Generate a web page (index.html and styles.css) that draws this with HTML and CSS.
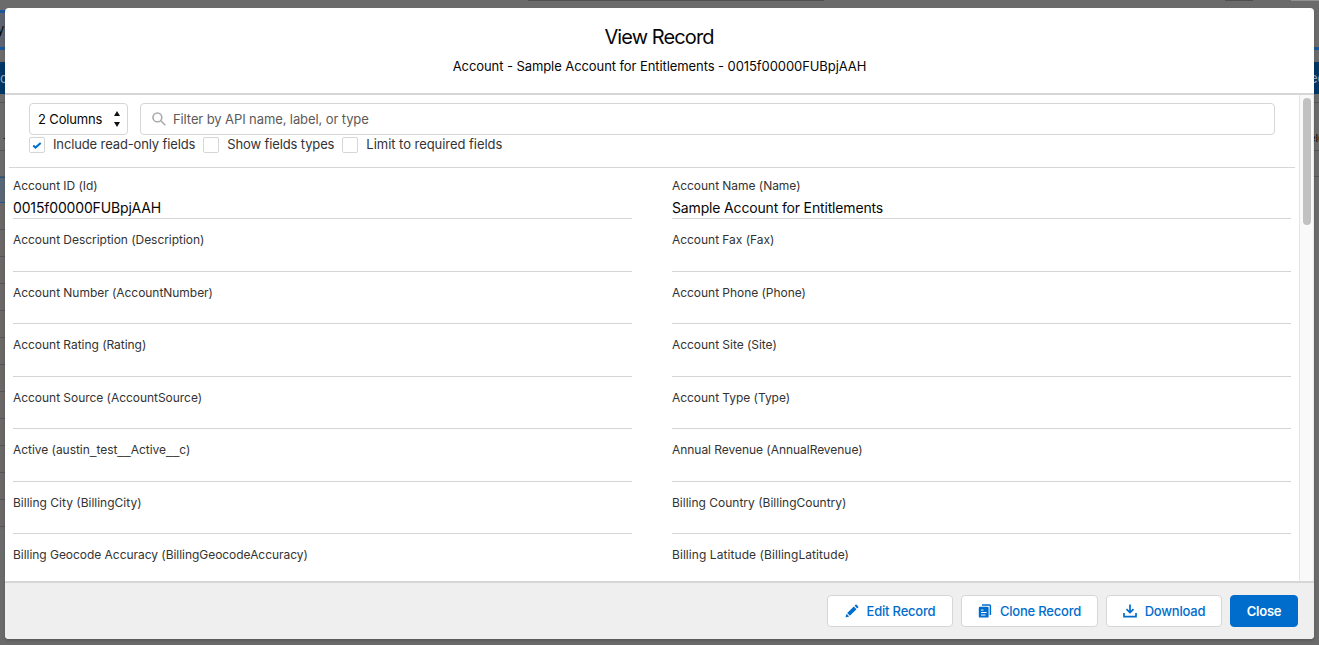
FILE: index.html
```
<!DOCTYPE html>
<html lang="en">
<head>
<meta charset="utf-8">
<title>View Record</title>
<link rel="stylesheet" href="styles.css">
</head>
<body>
<div class="page">
  <div class="edge edge-left">
    <div class="tab-bar">y</div>
    <div class="action-bar">c</div>
    <div class="toolbar-line"></div>
    <div class="heading-cell">-</div>
    <div class="filter-cell"></div>
    <div class="selected-cell"></div>
    <div class="grid-lines"></div>
  </div>
  <div class="top-strip"><i class="search-edge"></i><i class="menu-edge"></i><i class="avatar-edge"></i></div>
  <div class="edge edge-right">
    <div class="tab-bar"></div>
    <div class="action-bar">ec</div>
    <div class="toolbar-line"></div>
    <div class="heading-cell">ele</div>
    <div class="filter-cell"></div>
  </div>
</div>
<section class="modal">
  <header class="modal-header">
    <h2 class="title">View Record</h2>
    <p class="tagline">Account - Sample Account for Entitlements - 0015f00000FUBpjAAH</p>
  </header>
  <div class="modal-body">
    <div class="content">
      <div class="filters">
        <div class="filter-row">
          <div class="select"><span>2 Columns</span>
            <svg width="6" height="16" viewBox="0 0 6 16"><path d="M3 0 6 5H0zM3 16 6 11H0z" fill="#111"/></svg>
          </div>
          <div class="search">
            <svg width="14" height="14" viewBox="0 0 14 14" fill="none" stroke="#aaa" stroke-width="1.6" stroke-linecap="round"><circle cx="5.4" cy="5.4" r="4.4"/><path d="m8.8 8.8 4 3.9"/></svg>
            <span>Filter by API name, label, or type</span>
          </div>
        </div>
        <div class="checks">
          <label class="check"><span class="box"><svg width="10" height="8" viewBox="0 0 10 8" fill="none" stroke="#0070d2" stroke-width="2"><path d="m1.2 4.6 2.3 2 5.2-4.6"/></svg></span><span class="check-text">Include read-only fields</span></label>
          <label class="check"><span class="box"></span><span class="check-text">Show fields types</span></label>
          <label class="check"><span class="box"></span><span class="check-text loose">Limit to required fields</span></label>
        </div>
      </div>
      <div class="fields">
        <div class="field"><span class="label">Account ID (Id)</span><span class="value">0015f00000FUBpjAAH</span></div>
        <div class="field"><span class="label">Account Name (Name)</span><span class="value">Sample Account for Entitlements</span></div>
        <div class="field"><span class="label">Account Description (Description)</span></div>
        <div class="field"><span class="label">Account Fax (Fax)</span></div>
        <div class="field"><span class="label">Account Number (AccountNumber)</span></div>
        <div class="field"><span class="label">Account Phone (Phone)</span></div>
        <div class="field"><span class="label">Account Rating (Rating)</span></div>
        <div class="field"><span class="label">Account Site (Site)</span></div>
        <div class="field"><span class="label">Account Source (AccountSource)</span></div>
        <div class="field"><span class="label">Account Type (Type)</span></div>
        <div class="field"><span class="label">Active (austin<span class="wide">_</span>test<span class="wide">__</span>Active<span class="wide">__</span>c)</span></div>
        <div class="field"><span class="label">Annual Revenue (AnnualRevenue)</span></div>
        <div class="field"><span class="label narrow">Billing City (BillingCity)</span></div>
        <div class="field"><span class="label narrow">Billing Country (BillingCountry)</span></div>
        <div class="field"><span class="label">Billing Geocode Accuracy (BillingGeocodeAccuracy)</span></div>
        <div class="field"><span class="label latitude">Billing Latitude (BillingLatitude)</span></div>
      </div>
    </div>
    <div class="scrollbar"><div class="thumb"></div></div>
  </div>
  <footer class="modal-footer">
    <button class="btn edit"><svg width="14" height="14" viewBox="0 0 14 14" fill="currentColor"><path d="M.5 13.5 1.5 9.8 4.2 12.5zM2.2 9.1 8.8 2.5 11.5 5.2 4.9 11.8zM9.6 1.7 10.5.8Q11 .3 11.6.8L13.2 2.4Q13.7 3 13.2 3.5L12.3 4.4z"/></svg><span>Edit Record</span></button>
    <button class="btn clone"><svg width="14" height="14" viewBox="0 0 14 14"><path d="M4 1H11.4Q12.4 1 12.4 2V11" fill="none" stroke="currentColor" stroke-width="1.5"/><rect x=".8" y="2.8" width="9.8" height="10.8" rx="1.2" fill="currentColor"/><path d="M3 6.1H5.5M3 8.5H8.6M3 11H7.5" stroke="#fff" stroke-width="1"/></svg><span>Clone Record</span></button>
    <button class="btn download"><svg width="14" height="14" viewBox="0 0 14 14" fill="none" stroke="currentColor" stroke-width="1.7"><path d="M7 .5V8M3.5 5.2 7 8.6l3.5-3.4M1 9v3.7H13V9"/></svg><span>Download</span></button>
    <button class="btn close"><span>Close</span></button>
  </footer>
</section>
</body>
</html>
```
FILE: styles.css
```
* { box-sizing: border-box; }
body { margin: 0; width: 1319px; height: 645px; overflow: hidden; padding: 8px 5px 6px; font-family: Inter, "Liberation Sans", sans-serif; font-size: 13px; color: #080707; background: #6b6b6b; }
svg { display: block; flex: none; }

/* Dimmed page behind the dialog */
.page { position: absolute; inset: 0; overflow: hidden; }
.edge { position: absolute; top: 0; bottom: 0; width: 8px; padding-top: 10px; overflow: hidden; display: flex; flex-direction: column; }
.edge-left { left: 0; }
.edge-right { right: 0; width: 5px; align-items: stretch; }
.tab-bar { height: 40px; border-top: 3px solid #1b569b; border-bottom: 3px solid #1b569b; background: #5d6370; line-height: 33px; text-indent: -3px; margin-bottom: 12px; flex: none; }
.edge-right .tab-bar { border-top: 0; background: none; }
.action-bar { height: 32px; background: #003765; color: #9ca6b2; line-height: 33px; flex: none; }
.edge-right .action-bar { text-indent: -4px; }
.toolbar-line { height: 9px; border-bottom: 1px solid #555; flex: none; }
.heading-cell { height: 48px; line-height: 70px; text-indent: 3px; border-bottom: 1px solid #555; font-size: 11px; flex: none; }
.edge-right .heading-cell { text-indent: -5px; }
.filter-cell { height: 26px; border-bottom: 1px solid #555; flex: none; }
.selected-cell { height: 26px; border: solid #1b5a91; border-width: 1px 0; background: #596675; flex: none; }
.grid-lines { height: 326px; background: repeating-linear-gradient(#6b6767 0 26px, #565454 26px 27px); flex: none; }
.top-strip { position: absolute; inset: 0 0 auto; height: 1px; }
.top-strip i { position: absolute; top: 0; height: 1px; background: #505050; }
.search-edge { left: 528px; width: 296px; }
.menu-edge { left: 1225px; width: 28px; }
.top-strip .avatar-edge { left: 1291px; width: 28px; background: #929292; }

.modal { position: relative; height: 631px; display: flex; flex-direction: column; background: #fff; border-radius: 4px; overflow: hidden; box-shadow: 0 2px 3px rgba(0,0,0,.16); }
.modal-header { height: 87px; flex: none; border-bottom: 2px solid #d6d6d6; text-align: center; padding-top: 17px; }
.title { margin: 0; font-weight: 400; font-size: 20px; line-height: 25px; letter-spacing: -.9px; padding-right: 1px; }
.tagline { margin: 7px 0 0; line-height: 19px; letter-spacing: -.08px; }
.modal-body { flex: 1; min-height: 0; display: flex; overflow: hidden; }
.content { flex: 1; padding: 0 4px; overflow: hidden; }
.scrollbar { width: 15px; border-left: 1px solid #e4e4e4; border-right: 1px solid #e9e9e9; background: #f9f9f9; padding: 3px 2px 0 3px; }
.thumb { width: 8px; height: 127px; border-radius: 4px; background: #c1c1c1; }

.filters { height: 73px; padding: 8px 20px 0; border-bottom: 1px solid #d6d6d6; }
.filter-row { display: flex; gap: 12px; height: 32px; }
.select, .search { border: 1px solid #d6d6d6; border-radius: 4px; display: flex; align-items: center; }
.select { width: 99px; padding: 0 7px 0 8px; justify-content: space-between; letter-spacing: -.15px; }
.search { flex: 1; padding-left: 11px; gap: 7px; color: #5c5a58; letter-spacing: -.1px; }
.checks { display: flex; gap: 8px; height: 20px; align-items: center; color: #333; }
.check { display: flex; align-items: center; gap: 8px; }
.check-text { letter-spacing: -.13px; padding-bottom: 2px; }
.check-text.loose { letter-spacing: -.04px; }
.box { width: 16px; height: 16px; border: 1px solid #d6d6d6; border-radius: 2px; display: flex; align-items: center; justify-content: center; }

.fields { display: grid; grid-template-columns: 619px 619px; column-gap: 40px; grid-template-rows: 51px; grid-auto-rows: 52.5px; padding-left: 4px; }
.field { border-bottom: 1px solid #d4d4d4; padding-top: 12px; }
.field:nth-child(-n+2) { padding-top: 9px; }
.label { display: block; font-size: 12px; line-height: 18px; color: #333; letter-spacing: -.04px; }
.label.narrow { letter-spacing: 0; }
.label.latitude { letter-spacing: .07px; }
.wide { font-family: "Liberation Sans", sans-serif; letter-spacing: 0; }
.value { display: block; font-size: 14px; line-height: 22px; margin-top: 2px; letter-spacing: -.16px; }

.modal-footer { height: 58px; flex: none; border-top: 2px solid #d6d6d6; background: #efefef; display: flex; justify-content: flex-end; gap: 8px; padding: 12px 16px 0; }
.btn { height: 32px; border: 1px solid #d6d6d6; border-radius: 4px; background: #fff; color: #006dcc; font: 500 13px Inter, sans-serif; letter-spacing: -.2px; display: flex; align-items: center; justify-content: center; gap: 8px; padding: 0; }
.edit { width: 126px; }
.clone { width: 137px; }
.download { width: 116px; }
.close { width: 68px; background: #006dcc; border-color: #006dcc; color: #fff; font-weight: 600; }
```
